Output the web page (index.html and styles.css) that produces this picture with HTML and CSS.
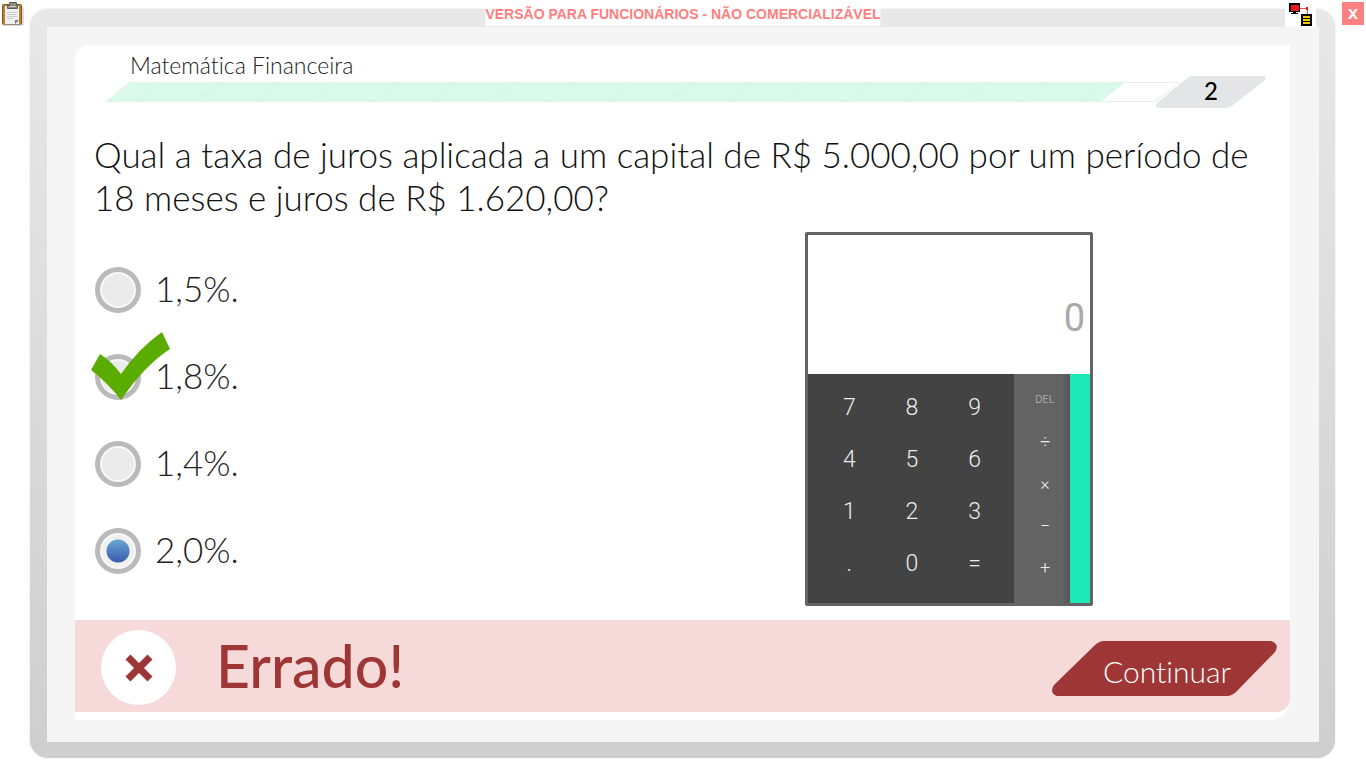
FILE: index.html
```html
<!DOCTYPE html>
<html lang="pt-BR">
<head>
<meta charset="utf-8">
<title>Matemática Financeira</title>
<link rel="stylesheet" href="styles.css">
</head>
<body>
<button class="tool tool-notes" type="button" aria-label="Anotações">
  <svg width="22" height="24" viewBox="0 0 22 24">
    <rect x="0.500" y="2.500" width="19" height="20" rx="1" fill="#b9812f" stroke="#80561c"/>
    <path d="M3 4h14v18H3z" fill="#f0f0f0"/>
    <path d="M1 23h20V5" fill="none" stroke="#bbb"/>
    <path d="M13 22v-4h4z" fill="#777"/>
    <path d="M5 10.500h10M5 12.500h9M5 14.500h10M5 16.500h6" stroke="#cdcdcd"/>
    <path d="M5.500 3.500h2V.5h7v3h1v3h-10z" fill="#8b8d84" stroke="#5b5d57"/>
    <path d="M7 4.500h7" stroke="#c8cac2"/>
  </svg>
</button>
<p class="notice">VERSÃO PARA FUNCIONÁRIOS - NÃO COMERCIALIZÁVEL</p>
<button class="tool tool-network" type="button" aria-label="Conexão">
  <svg width="31" height="27" viewBox="0 0 31 27" shape-rendering="crispEdges">
    <path d="M4 3h11v9H4zM8 12h3v1h2v1H6v-1h2z" fill="#000"/>
    <path d="M5 4h9v7H5z" fill="#e8171c"/>
    <path d="M5 4h9v7H5z" fill="none" stroke="#000"/>
    <path d="M15 8h7v6" fill="none" stroke="#ef4a4e"/>
    <path d="M21 7h2v3h-2z" fill="#e8171c"/>
    <path d="M16 14h11v12H16z" fill="#000"/>
    <path d="M18 16h7v2h-7zM18 19h7v2h-7zM18 22h7v2h-7z" fill="#f0c419"/>
  </svg>
</button>
<button class="close" type="button" aria-label="Fechar">X</button>

<main class="frame">
  <div class="mat">
    <form class="card">
      <header class="head">
        <div class="course">
          <h1 class="course-title">Matemática Financeira</h1>
          <div class="track" role="progressbar" aria-label="Progresso" aria-valuenow="95">
            <div class="track-inner">
              <div class="fill">
                <svg width="100%" height="17">
                  <defs>
                    <pattern id="steps" width="59" height="17" patternUnits="userSpaceOnUse" x="2">
                      <path d="M29 17L54 0" stroke="#d2ebe2" stroke-dasharray="1 2"/>
                    </pattern>
                  </defs>
                  <rect width="100%" height="17" fill="url(#steps)"/>
                </svg>
              </div>
            </div>
          </div>
        </div>
        <div class="counter">
          <svg class="shape" width="110" height="32" viewBox="0 0 110 32"><path d="M36 0H107Q112 1 108 5L77 29Q74 32 70 32H3Q-2 31 1 27L30 3Q33 0 36 0Z" fill="#e4e5e7"/></svg>
          <span class="counter-value">2</span>
        </div>
      </header>

      <h2 class="question" id="question">Qual a taxa de juros aplicada a um capital de R$ 5.000,00 por um período de 18 meses e juros de R$ 1.620,00?</h2>

      <div class="work">
        <div class="options" role="radiogroup" aria-labelledby="question">
          <label class="option"><input class="radio" type="radio" name="taxa">1,5%.</label>
          <label class="option"><input class="radio" type="radio" name="taxa">1,8%.
            <svg class="tick" width="80" height="69" viewBox="0 0 80 69"><path d="M0 38L9 22Q20 29 30 42Q47 17 71 0L79 17Q53 34 30 68Q17 51 0 38Z" fill="#5aad00"/></svg>
          </label>
          <label class="option"><input class="radio" type="radio" name="taxa">1,4%.</label>
          <label class="option"><input class="radio" type="radio" name="taxa" checked>2,0%.</label>
        </div>

        <section class="calc" aria-label="Calculadora">
          <output class="display">0</output>
          <div class="pad">
            <div class="digits">
              <button class="key" type="button">7</button><button class="key" type="button">8</button><button class="key" type="button">9</button>
              <button class="key" type="button">4</button><button class="key" type="button">5</button><button class="key" type="button">6</button>
              <button class="key" type="button">1</button><button class="key" type="button">2</button><button class="key" type="button">3</button>
              <button class="key" type="button">.</button><button class="key" type="button">0</button><button class="key" type="button">=</button>
            </div>
            <div class="ops">
              <button class="op op-del" type="button">DEL</button>
              <button class="op" type="button">÷</button>
              <button class="op" type="button">×</button>
              <button class="op" type="button">−</button>
              <button class="op" type="button">+</button>
            </div>
            <div class="drawer"></div>
          </div>
        </section>
      </div>

      <footer class="feedback">
        <span class="badge">
          <svg width="28" height="28" viewBox="0 0 28 28"><path d="M3 3L25 25M25 3L3 25" stroke="#9f3636" stroke-width="7"/></svg>
        </span>
        <strong class="verdict">Errado!</strong>
        <button class="next" type="button">
          <svg class="shape" width="225" height="55" viewBox="0 0 225 55"><path d="M52 0H219Q228 3 223 11L185 50Q180 55 175 55H5Q-3 52 2 44L42 5Q47 0 52 0Z" fill="#9f3636"/></svg>
          <span class="next-text">Continuar</span>
        </button>
      </footer>
    </form>
  </div>
</main>
</body>
</html>
```
FILE: styles.css
```css
* { box-sizing: border-box; }

body {
  margin: 0;
  min-height: 100vh;
  display: flex;
  position: relative;
  background: #fff;
  color: #111;
  font-family: Lato, sans-serif;
  font-weight: 300;
  font-variant-ligatures: none;
}

h1, h2, p { margin: 0; font-weight: inherit; }

button { margin: 0; padding: 0; border: 0; background: none; font: inherit; color: inherit; }

svg { display: block; }

.tool { position: absolute; top: 0; }
.tool-notes { left: 2px; top: 2px; }
.tool-network { right: 50px; background: #fff; }

.notice {
  position: absolute;
  top: 6px;
  left: 50%;
  transform: translateX(-50%);
  height: 20px;
  background: #fff;
  color: #ff8080;
  font: bold 14px/16px "Liberation Sans", sans-serif;
  white-space: nowrap;
}

.close {
  position: absolute;
  top: 2px;
  right: 2px;
  width: 22px;
  height: 23px;
  background: #ff8080;
  color: #fff;
  font: bold 15px/21px "Noto Sans", sans-serif;
}

.frame {
  flex: 1;
  display: flex;
  margin: 9px 31px 10px 30px;
  padding: 18px 16px 16px 17px;
  border-radius: 18px;
  background: linear-gradient(#e8e8e8, #cecece);
  box-shadow: 0 0 2px #ddd;
}

.mat {
  flex: 1;
  display: flex;
  padding: 18px 29px 22px 28px;
  background: #f5f5f5;
}

.card {
  flex: 1;
  display: flex;
  flex-direction: column;
  padding-bottom: 8px;
  border-radius: 14px 0 20px 0;
  background: #fff;
}

.head {
  display: flex;
  align-items: flex-end;
  padding: 6px 24px 0 30px;
}

.course { flex: 1; padding-bottom: 6px; }

.course-title {
  padding-left: 25px;
  font-size: 23px;
  line-height: 28px;
  color: #222;
}

.track {
  height: 20px;
  margin-top: 3px;
  margin-right: -24px;
  padding: 1px 2px;
  background: #ebebeb;
  clip-path: polygon(24px 0, 100% 0, calc(100% - 24px) 100%, 0 100%);
}

.track-inner {
  height: 18px;
  background: #fff;
  clip-path: polygon(23px 0, 100% 0, calc(100% - 23px) 100%, 0 100%);
}

.fill {
  width: 95%;
  height: 18px;
  background: #d8f9ec;
  clip-path: polygon(23px 0, 100% 0, calc(100% - 23px) 100%, 0 100%);
}

.counter {
  position: relative;
  width: 110px;
  height: 32px;
  display: flex;
  justify-content: center;
}

.shape { position: absolute; inset: 0; }

.counter-value {
  position: relative;
  font-size: 24px;
  line-height: 30px;
  font-weight: 500;
  color: #000;
}

.question {
  padding: 25px 36px 0 19px;
  font-size: 35px;
  line-height: 43px;
}

.work {
  flex: 1;
  display: flex;
  justify-content: space-between;
  padding: 13px 197px 13px 20px;
}

.options {
  display: flex;
  flex-direction: column;
  gap: 41px;
  padding-top: 35px;
}

.option {
  position: relative;
  display: flex;
  align-items: center;
  gap: 14px;
  height: 46px;
  font-size: 35px;
  line-height: 42px;
  color: #222;
}

.option { align-items: flex-start; }

.radio {
  appearance: none;
  flex: none;
  width: 46px;
  height: 46px;
  margin: 0;
  border: 5px solid #bababa;
  border-radius: 50%;
  background: #ebebeb;
  box-shadow: inset 0 0 0 2px #f8f8f8;
}

.radio:checked {
  background: radial-gradient(circle, transparent 11px, #f0f0f0 12px), linear-gradient(#67a5d0 20%, #3a5caf 80%);
}

.tick { position: absolute; left: -4px; top: -22px; }

.calc {
  width: 288px;
  border: 3px solid #646464;
  border-radius: 2px;
  display: flex;
  flex-direction: column;
  align-self: flex-start;
}

.display {
  display: flex;
  align-items: center;
  justify-content: flex-end;
  height: 139px;
  padding: 26px 5px 0 0;
  background: #fff;
  color: #a8a8a8;
  font: 400 38px/44px Roboto, sans-serif;
}

.pad {
  display: flex;
  height: 229px;
  color: #ececec;
  font-family: Roboto, sans-serif;
}

.digits {
  flex: 1;
  display: grid;
  grid-template-columns: repeat(3, 1fr);
  grid-auto-rows: 52px;
  padding: 8px 8px 0 10px;
  background: #434343;
}

.key { font-size: 23px; line-height: 52px; }

.ops {
  width: 56px;
  display: flex;
  flex-direction: column;
  padding: 4px 0 0 6px;
  background: linear-gradient(90deg, #636363 85%, #565656);
}

.op { height: 42px; font-size: 18px; }
.op-del { font-size: 11px; color: #c4c4c4; }

.drawer { width: 20px; background: #1de9b6; }

.feedback {
  display: flex;
  align-items: center;
  height: 92px;
  padding: 0 13px 0 26px;
  border-radius: 0 0 14px 0;
  background: #f6d9d9;
}

.badge {
  display: flex;
  align-items: center;
  justify-content: center;
  width: 75px;
  height: 75px;
  margin-top: 3px;
  border-radius: 50%;
  background: #fff;
}

.verdict {
  flex: 1;
  padding-left: 40px;
  font-size: 59px;
  line-height: 64px;
  font-weight: 500;
  color: #9f3636;
}

.next {
  position: relative;
  width: 225px;
  height: 55px;
  margin-top: 5px;
  color: #fff;
}

.next-text {
  position: relative;
  display: block;
  padding: 5px 0 0 5px;
  font-size: 30px;
  line-height: 40px;
}
```
